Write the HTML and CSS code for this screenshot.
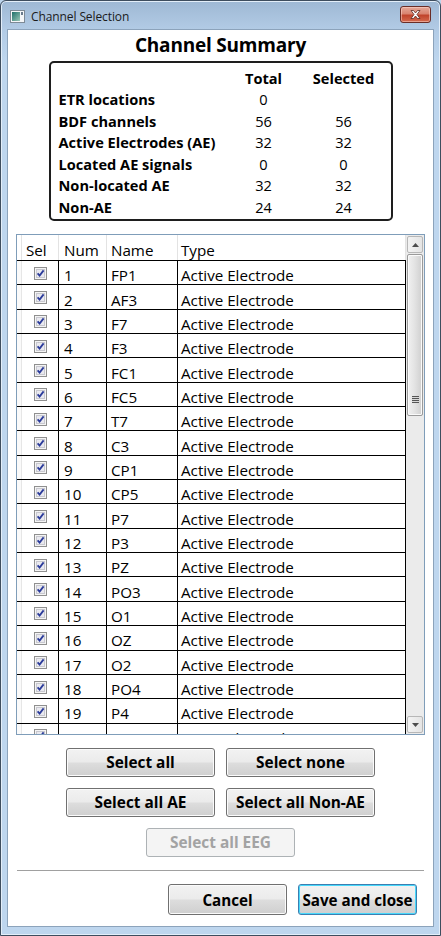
FILE: index.html
```html
<!DOCTYPE html>
<html>
<head>
<meta charset="utf-8">
<link rel="stylesheet" href="styles.css">
</head>
<body>
<div class="window">
  <div class="titlebar">
    <svg class="appicon" width="15" height="13" viewBox="0 0 15 13">
      <rect x="0.5" y="0.5" width="14" height="12" fill="#f4f6f8" stroke="#7d8a96"/>
      <rect x="2" y="2" width="8" height="9" fill="url(#gi)"/>
      <rect x="11" y="2" width="2" height="3" fill="#6a7b8c"/>
      <defs><linearGradient id="gi" x1="0" y1="0" x2="1" y2="1"><stop offset="0" stop-color="#1f6f6a"/><stop offset="1" stop-color="#9ac7b8"/></linearGradient></defs>
    </svg>
    <span class="title">Channel Selection</span>
    <div class="close">
      <svg width="31" height="17" viewBox="0 0 31 17">
        <path d="M11 4.5 L13.5 4.5 L15.5 7 L17.5 4.5 L20 4.5 L17 8.5 L20 12.5 L17.5 12.5 L15.5 10 L13.5 12.5 L11 12.5 L14 8.5 Z" fill="#ffffff" stroke="#5a2a22" stroke-width="0.8" stroke-linejoin="round"/>
      </svg>
    </div>
  </div>
  <div class="client">
    <h1 class="heading">Channel Summary</h1>
    <div class="summary">
      <span></span><span class="colh">Total</span><span class="colh">Selected</span>
      <span class="lbl">ETR locations</span><span class="val">0</span><span class="val"></span>
      <span class="lbl">BDF channels</span><span class="val">56</span><span class="val">56</span>
      <span class="lbl">Active Electrodes (AE)</span><span class="val">32</span><span class="val">32</span>
      <span class="lbl">Located AE signals</span><span class="val">0</span><span class="val">0</span>
      <span class="lbl">Non-located AE</span><span class="val">32</span><span class="val">32</span>
      <span class="lbl">Non-AE</span><span class="val">24</span><span class="val">24</span>
    </div>

    <div class="grid">
      <div class="gridmain">
        <div class="ghead">
          <div class="rh"></div>
          <div class="c c-sel">Sel</div>
          <div class="c c-num">Num</div>
          <div class="c c-name">Name</div>
          <div class="c c-type">Type</div>
        </div>
        <div class="gbody" id="gbody"></div>
      </div>
      <div class="vscroll">
        <div class="sbtn"><svg width="7" height="4" viewBox="0 0 7 4"><path d="M0 4 L3.5 0 L7 4 Z" fill="#4d4d4d"/></svg></div>
        <div class="strack">
          <div class="thumb"><span class="grip"></span></div>
        </div>
        <div class="sbtn"><svg width="7" height="4" viewBox="0 0 7 4"><path d="M0 0 L3.5 4 L7 0 Z" fill="#4d4d4d"/></svg></div>
      </div>
    </div>

    <div class="btns">
      <div class="btnrow">
        <button class="btn">Select all</button>
        <button class="btn">Select none</button>
      </div>
      <div class="btnrow">
        <button class="btn">Select all AE</button>
        <button class="btn">Select all Non-AE</button>
      </div>
      <div class="btnrow">
        <button class="btn disabled">Select all EEG</button>
      </div>
    </div>
    <div class="sep"></div>
    <div class="footer">
      <button class="btn fbtn">Cancel</button>
      <button class="btn fbtn default">Save and close</button>
    </div>
  </div>
</div>
<script src="script.js"></script>
</body>
</html>
```

FILE: script.js
```js
var names = ["FP1","AF3","F7","F3","FC1","FC5","T7","C3","CP1","CP5","P7","P3","PZ","PO3","O1","OZ","O2","PO4","P4","P8"];
var body = document.getElementById("gbody");
var check = '<svg class="cb" width="13" height="13" viewBox="0 0 13 13">' +
  '<rect x="0.5" y="0.5" width="12" height="12" fill="#f4f4f4" stroke="#8f8f8f"/>' +
  '<rect x="2.5" y="2.5" width="8" height="8" fill="#e9e9ef" stroke="#c8c8cf"/>' +
  '<path d="M3.6 6.4 L5.6 8.6 L9.6 3.4" fill="none" stroke="#2b3b9a" stroke-width="1.8"/>' +
  '</svg>';
names.forEach(function (n, i) {
  var r = document.createElement("div");
  r.className = "grow";
  r.innerHTML = '<div class="rh"></div><div class="c c-sel">' + check + '</div>' +
    '<div class="c c-num">' + (i + 1) + '</div>' +
    '<div class="c c-name">' + n + '</div>' +
    '<div class="c c-type">Active Electrode</div>';
  body.appendChild(r);
});
```

FILE: styles.css
```css
* { box-sizing: border-box; }
html, body { margin: 0; padding: 0; }
body {
  width: 441px;
  height: 936px;
  overflow: hidden;
  background: #bcd4ec;
  font-family: "Open Sans", "Noto Sans", sans-serif;
  color: #000;
}
.window {
  width: 441px;
  height: 936px;
  border: 1px solid #3e4d5e;
  border-radius: 6px 6px 0 0;
  background: linear-gradient(to bottom, #9eb8d4 0px, #b3cce6 30px, #bed6ee 60px, #bed6ee 100%);
  display: flex;
  flex-direction: column;
  box-shadow: inset 0 0 0 1px #e3eef9;
}
.titlebar {
  height: 28px;
  display: flex;
  align-items: center;
  padding: 3px 9px 0 9px;
}
.appicon { flex: none; margin-right: 6px; }
.title {
  font-size: 12px;
  color: #1b1b1b;
  flex: 1;
  letter-spacing: -0.1px;
}
.close {
  width: 31px;
  height: 17px;
  border: 1px solid #6a2d26;
  border-radius: 3px;
  background: linear-gradient(to bottom, #e5a898 0%, #d98470 45%, #c0442c 55%, #d46a4e 100%);
  box-shadow: inset 0 0 0 1px rgba(255,220,210,0.5);
  display: flex;
  align-items: center;
  justify-content: center;
  margin-top: -4px;
  margin-right: 0;
}
.close svg { display: block; margin: -1px; }
.client {
  flex: 1;
  margin: 0 6px 8px 6px;
  border: 1px solid #8ca3bb;
  background: #fff;
  display: flex;
  flex-direction: column;
  align-items: center;
  padding-top: 2px;
}
.heading {
  margin: 0;
  font-size: 19px;
  line-height: 26px;
  font-weight: 700;
  letter-spacing: -0.2px;
}
.summary {
  margin-top: 3px;
  width: 344px;
  height: 160px;
  border: 2px solid #1e1e1e;
  border-radius: 5px;
  display: grid;
  grid-template-columns: 1fr 66px 94px;
  grid-auto-rows: 21.5px;
  padding: 4px 0 0 8px;
  font-size: 14.6px;
  align-items: center;
}
.summary .colh { font-weight: 700; text-align: center; }
.summary .lbl { font-weight: 700; white-space: nowrap; }
.summary .val { text-align: center; }

.grid {
  margin-top: 13px;
  align-self: stretch;
  margin-left: 8px;
  margin-right: 8px;
  height: 501px;
  border: 1px solid #7f9db9;
  display: flex;
  overflow: hidden;
}
.gridmain {
  flex: 1;
  overflow: hidden;
  font-size: 15.2px;
}
.ghead {
  height: 26px;
  display: flex;
  border-bottom: 1px solid #000;
  width: 390px;
}
.ghead .c {
  border-right: 1px solid #e3e3e3;
  padding-top: 5px;
}
.ghead .rh { border-right: 1px solid #e3e3e3; }
.rh { width: 5px; flex: none; }
.c {
  flex: none;
  height: 100%;
  padding-left: 4px;
  white-space: nowrap;
  display: flex;
  align-items: center;
}
.c-sel { width: 37px; }
.ghead .c-sel { padding-left: 4px; }
.c-num { width: 48px; padding-left: 5px; }
.c-name { width: 71px; padding-left: 4px; }
.c-type { width: 228px; padding-left: 3px; }
.gbody { width: 390px; }
.grow {
  height: 24.35px;
  display: flex;
  border-bottom: 1px solid #000;
}
.grow .rh { border-right: 1px solid #e6e6e6; background: #fafafa; }
.grow .c { border-right: 1px solid #000; padding-top: 5px; }
.grow .c-sel { justify-content: center; padding-left: 0; padding-top: 1px; }
.cb { display: block; }

.vscroll {
  width: 18px;
  flex: none;
  display: flex;
  flex-direction: column;
  background: #ebebeb;
  padding: 1px 1px 1px 1px;
}
.sbtn {
  height: 17px;
  border: 1px solid #b7b7b7;
  border-radius: 2px;
  background: linear-gradient(to right, #f3f3f3, #e4e4e4);
  display: flex;
  align-items: center;
  justify-content: center;
  flex: none;
}
.strack { flex: 1; padding: 1px 0; }
.thumb {
  height: 162px;
  border: 1px solid #9a9a9a;
  border-radius: 2px;
  background: linear-gradient(to right, #f1f1f1 0%, #e2e2e2 50%, #cfcfcf 100%);
  box-shadow: inset 0 0 0 1px #fafafa;
  display: flex;
  align-items: flex-end;
  justify-content: center;
  padding-bottom: 12px;
}
.grip {
  width: 7px;
  height: 7px;
  background: repeating-linear-gradient(to bottom, #555 0, #555 1px, #d8d8d8 1px, #d8d8d8 2px);
}

.btns {
  margin-top: 13px;
  display: flex;
  flex-direction: column;
  gap: 11px;
  align-items: center;
}
.btnrow { display: flex; gap: 11px; }
.btn {
  font-family: inherit;
  width: 149px;
  height: 29px;
  font-size: 15.4px;
  font-weight: 700;
  color: #000;
  border: 1px solid #707070;
  border-radius: 3px;
  background: linear-gradient(to bottom, #f2f2f2 0%, #ebebeb 48%, #dddddd 52%, #cfcfcf 100%);
  box-shadow: inset 0 0 0 1px #fbfbfb;
  padding: 0;
  white-space: nowrap;
}
.btn.disabled {
  color: #a3a3a3;
  background: #f4f4f4;
  border-color: #adb2b5;
  box-shadow: none;
}
.sep {
  align-self: stretch;
  margin: 13px 9px 0 9px;
  height: 1px;
  background: #a0a0a0;
}
.footer {
  align-self: stretch;
  display: flex;
  justify-content: flex-end;
  gap: 11px;
  margin-top: 13px;
  padding-right: 16px;
}
.fbtn { width: 119px; height: 31px; font-size: 15.2px; }
.fbtn.default {
  border-color: #3c7fb1;
  box-shadow: inset 0 0 0 1px #48d8fb;
}
```
